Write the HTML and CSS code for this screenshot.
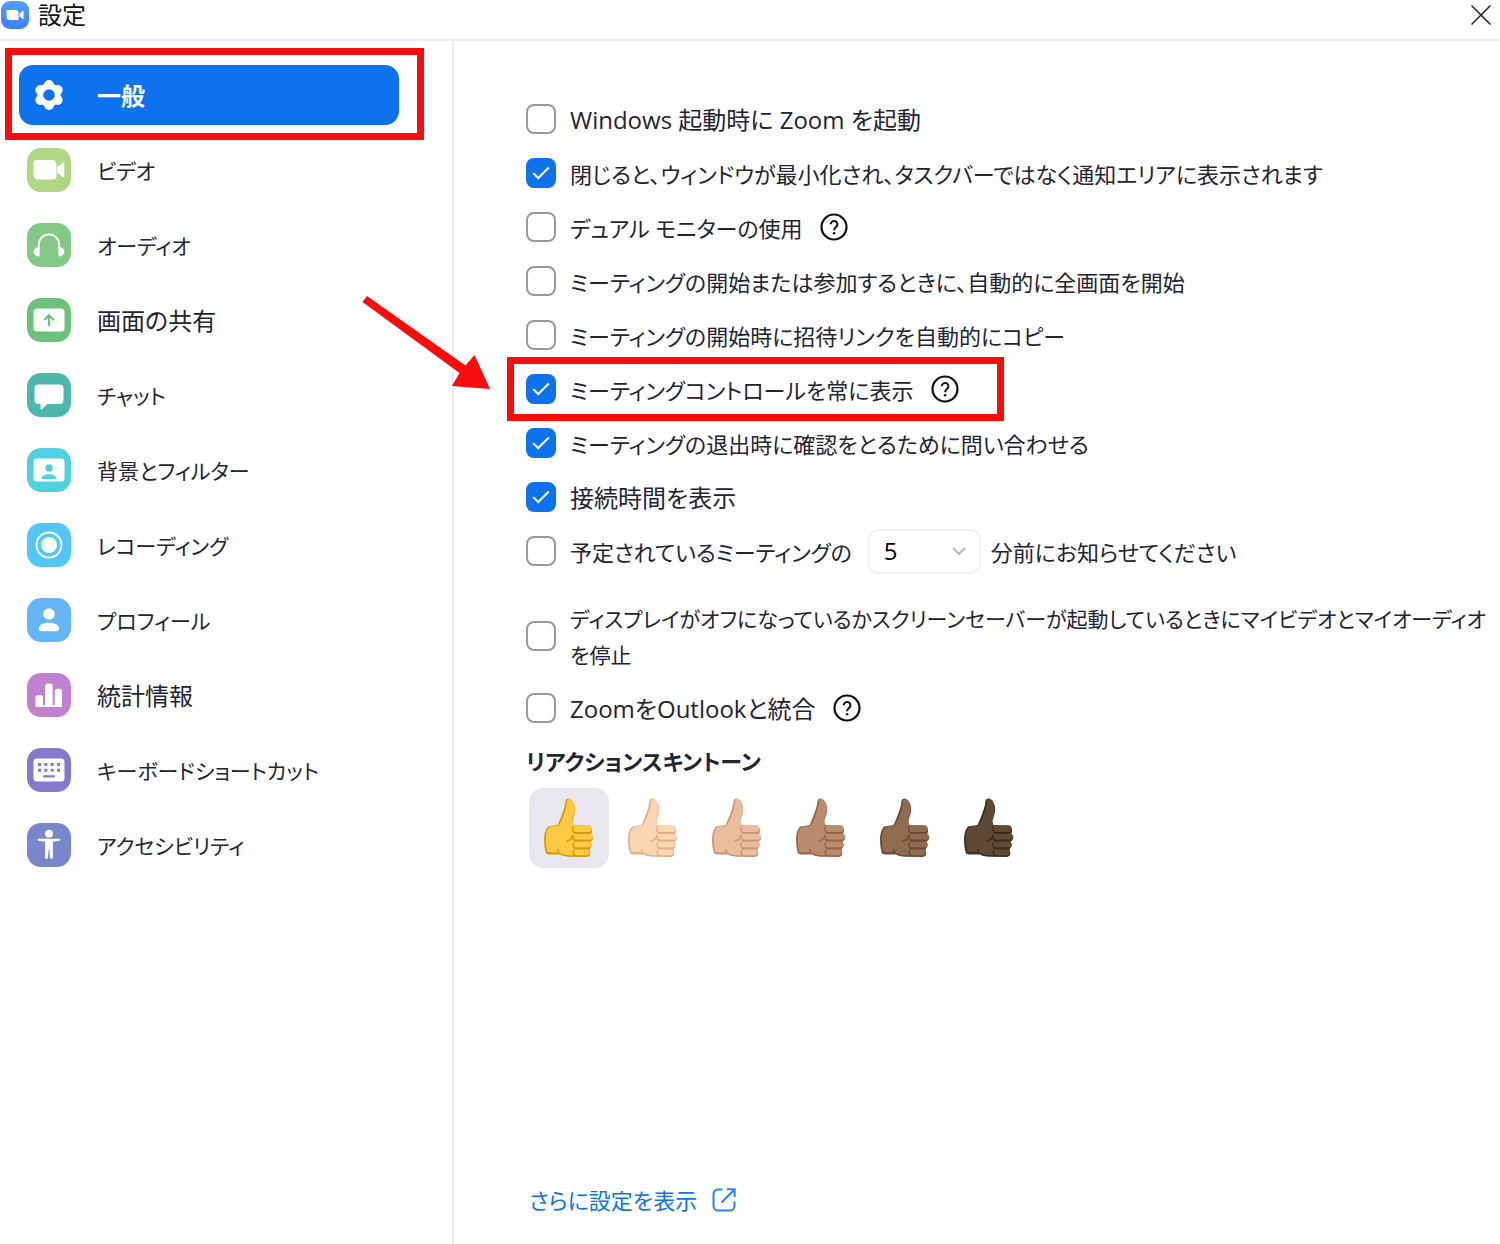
FILE: index.html
```html
<!DOCTYPE html>
<html lang="ja">
<head>
    <meta charset="UTF-8">
    <meta name="viewport" content="width=device-width, initial-scale=1">
    <title>設定</title>
    <link rel="stylesheet" href="styles.css">
</head>
<body>
    <!-- 共通アイコン -->
    <svg class="sprite" aria-hidden="true">
        <symbol id="help" viewBox="0 0 28 28">
            <circle cx="14" cy="14" r="12.5" fill="none" stroke="#111" stroke-width="2.2"/>
            <path d="M10.8 11.2a3.3 3.3 0 1 1 5.6 2.4c-1.2 1.1-2.3 1.7-2.3 3.6" fill="none" stroke="#111" stroke-width="2"/>
            <circle cx="14.1" cy="20.3" r="1.3" fill="#111"/>
        </symbol>
        <symbol id="thumb" viewBox="0 0 50 60">
            <path class="shade" d="M24.5.5C22.500.5 21.600 1.500 21.400 3.500C21 8 19.500 12.500 17.500 17.500C16 21.500 14.800 24.500 13.500 27L4 28.500C1 32 0 36 0 41C0 46 .6 51 2 55.500C4 57 12 56.500 16 56.500C19 58.500 23 58.700 28 58.700L42 59C45 59 46.500 57.500 46.300 55L45.500 51C48 49 48.400 46.500 46.500 43.500C50 42 50.500 38.500 47 36.200C48.800 33.500 48.500 29 45 27.800L29.500 27C28 25 28.300 22 29.400 19.500C31 15.500 31.500 11.500 31 8.500C30 4.500 27.500.5 24.500.5Z"/>
            <path d="M25 .8C23.600 1 23.300 2.500 23 4C22.500 9 21.200 13.500 19.200 18.500C17.800 22 16.500 25 14.500 27.600L5.500 29C2.500 32 1.700 36 1.700 41C1.700 46 2.200 50 3.500 54C6 54.700 12 54.200 16 54.700C19 56.800 23 57.200 30 57.200L31 28C27.500 26 27.500 22 29 18.500C30.500 15 31.300 11.500 30.600 8.500C29.800 5 27.700 1 25 .8Z"/>
            <rect x="29.500" y="27.200" width="18" height="6.800" rx="3"/>
            <rect x="29.500" y="35.800" width="19.500" height="6" rx="3"/>
            <rect x="29.500" y="43.500" width="18" height="6" rx="3"/>
            <rect x="29.500" y="51.300" width="16" height="6" rx="3"/>
            <path class="crease" d="M29.200 28.500C28.300 31 28.700 34 31 35L46.500 35M29.500 37C28.500 40.500 29.500 42.500 32 42.600L47 42.600M29.500 44.500C28.500 48 29.500 50.400 32 50.500L46 50.500M29.500 52C28.500 55.500 30 58 33 58M29 37C28 40.500 25 42.500 22.500 43.500M15 55C14 54 13.700 52.500 13.800 51"/>
        </symbol>
    </svg>

    <header class="titlebar">
        <svg class="logo" viewBox="0 0 28 28" aria-hidden="true">
            <defs>
                <linearGradient id="logo-bg" x1="0" y1="0" x2="0" y2="1">
                    <stop offset="0" stop-color="#559eff"/>
                    <stop offset="1" stop-color="#3b80fb"/>
                </linearGradient>
            </defs>
            <rect width="28" height="28" rx="9" fill="url(#logo-bg)"/>
            <path d="M5.500 9h9a3 3 0 0 1 3 3v7h-9a3 3 0 0 1-3-3zM18.500 12.500l4-3v9l-4-3z" fill="#fff"/>
        </svg>
        <h1>設定</h1>
        <button type="button" class="close" aria-label="閉じる">
            <svg viewBox="0 0 20 20"><path d="M.5.5l19 19M19.500.5l-19 19" stroke="#222" stroke-width="1.5"/></svg>
        </button>
    </header>

    <div class="layout">
        <nav class="sidebar">
            <a href="#general" class="nav-item active marked kanji" aria-current="page">
                <svg viewBox="0 0 44 44" aria-hidden="true">
                    <g fill="#fff">
                        <circle cx="22" cy="22" r="11.700"/>
                        <circle cx="22" cy="12" r="4.900"/>
                        <circle cx="30.700" cy="17" r="4.900"/>
                        <circle cx="30.700" cy="27" r="4.900"/>
                        <circle cx="22" cy="32" r="4.900"/>
                        <circle cx="13.300" cy="27" r="4.900"/>
                        <circle cx="13.300" cy="17" r="4.900"/>
                    </g>
                    <circle cx="22" cy="22" r="5.800" fill="#0e72ed"/>
                </svg>
                <span>一般</span>
            </a>
            <a href="#video" class="nav-item">
                <svg viewBox="0 0 44 44" aria-hidden="true">
                    <rect width="44" height="44" rx="14" fill="#afd884"/>
                    <path d="M9.500 12H25a4.500 4.500 0 0 1 4.500 4.500V28.500a3 3 0 0 1-3 3H11a4.500 4.500 0 0 1-4.500-4.500V15a3 3 0 0 1 3-3zM30.300 19l5.500-4.300q1.500-.8 1.500.8v12.500q0 1.600-1.500.8l-5.500-4.300z" fill="#fff"/>
                </svg>
                <span>ビデオ</span>
            </a>
            <a href="#audio" class="nav-item">
                <svg viewBox="0 0 44 44" aria-hidden="true">
                    <rect width="44" height="44" rx="14" fill="#84c887"/>
                    <path d="M11.800 26v-4.500a10.200 10.200 0 0 1 20.400 0V26" fill="none" stroke="#fff" stroke-width="1.700"/>
                    <path d="M12.600 24v9.500c-3.400 0-6-2-6-4.800s2.600-4.700 6-4.700zM31.400 24v9.500c3.400 0 6-2 6-4.800s-2.600-4.700-6-4.700z" fill="#fff"/>
                </svg>
                <span>オーディオ</span>
            </a>
            <a href="#share" class="nav-item kanji">
                <svg viewBox="0 0 44 44" aria-hidden="true">
                    <rect width="44" height="44" rx="14" fill="#6cc17b"/>
                    <rect x="6.500" y="10.500" width="31" height="23" rx="3.500" fill="#fff"/>
                    <path d="M22 28V17.500M17.300 22L22 17.300l4.700 4.700" fill="none" stroke="#6cc17b" stroke-width="2.300"/>
                </svg>
                <span>画面の共有</span>
            </a>
            <a href="#chat" class="nav-item">
                <svg viewBox="0 0 44 44" aria-hidden="true">
                    <rect width="44" height="44" rx="14" fill="#4eb6ac"/>
                    <path d="M11.500 11.500h21a4 4 0 0 1 4 4V27a4 4 0 0 1-4 4H20.300l-5.300 5.200q-1.400 1-1.400-.8V31h-2.100a4 4 0 0 1-4-4V15.500a4 4 0 0 1 4-4z" fill="#fff"/>
                </svg>
                <span>チャット</span>
            </a>
            <a href="#background" class="nav-item">
                <svg viewBox="0 0 44 44" aria-hidden="true">
                    <rect width="44" height="44" rx="14" fill="#50d0e1"/>
                    <rect x="6.500" y="10.500" width="31" height="23" rx="3.500" fill="#fff"/>
                    <circle cx="22" cy="20" r="3.700" fill="#50d0e1"/>
                    <path d="M14.300 31c.4-3 3.300-4.800 7.700-4.800s7.300 1.800 7.700 4.800z" fill="#50d0e1"/>
                </svg>
                <span>背景とフィルター</span>
            </a>
            <a href="#recording" class="nav-item">
                <svg viewBox="0 0 44 44" aria-hidden="true">
                    <rect width="44" height="44" rx="14" fill="#52c5f9"/>
                    <circle cx="22" cy="22" r="12.500" fill="none" stroke="#fff" stroke-width="1.900"/>
                    <circle cx="22" cy="22" r="8" fill="#fff"/>
                </svg>
                <span>レコーディング</span>
            </a>
            <a href="#profile" class="nav-item">
                <svg viewBox="0 0 44 44" aria-hidden="true">
                    <rect width="44" height="44" rx="14" fill="#66b6f7"/>
                    <circle cx="22" cy="16" r="5.800" fill="#fff"/>
                    <path d="M22 24.700c6 0 10 2.300 10 5.800q0 2.800-2.800 2.800H14.800Q12 33.300 12 30.500c0-3.500 4-5.800 10-5.800z" fill="#fff"/>
                </svg>
                <span>プロフィール</span>
            </a>
            <a href="#stats" class="nav-item kanji">
                <svg viewBox="0 0 44 44" aria-hidden="true">
                    <rect width="44" height="44" rx="14" fill="#c181d1"/>
                    <path d="M8.500 34V24.500a2.500 2.500 0 0 1 2.500-2.500h2.500a2.500 2.500 0 0 1 2.500 2.500V32h2.200V13a2.500 2.500 0 0 1 2.500-2.500h2.500a2.500 2.500 0 0 1 2.500 2.500V32h2V18.300a2.500 2.500 0 0 1 2.500-2.500h2.300a2.500 2.500 0 0 1 2.500 2.500V34z" fill="#fff"/>
                </svg>
                <span>統計情報</span>
            </a>
            <a href="#keyboard" class="nav-item">
                <svg viewBox="0 0 44 44" aria-hidden="true">
                    <rect width="44" height="44" rx="14" fill="#8679cb"/>
                    <rect x="6.500" y="10.500" width="31" height="23" rx="3.500" fill="#fff"/>
                    <path d="M11 16.400h22M11 22.300h22" stroke="#8679cb" stroke-width="3" stroke-dasharray="3 3.330"/>
                    <path d="M17 28.300h10" stroke="#8679cb" stroke-width="2.200" stroke-linecap="round"/>
                </svg>
                <span>キーボードショートカット</span>
            </a>
            <a href="#accessibility" class="nav-item">
                <svg viewBox="0 0 44 44" aria-hidden="true">
                    <rect width="44" height="44" rx="14" fill="#7986cb"/>
                    <circle cx="22" cy="10.700" r="3.900" fill="#fff"/>
                    <path d="M11.500 15.800h21q.8 0 .8.900t-.8 1l-6.600 1V34.500q0 1.200-1.400 1.200t-1.500-1.200L22.300 26h-.6l-.7 8.500q-.1 1.200-1.500 1.200t-1.400-1.200V18.700l-6.600-1q-.8-.1-.8-1t.8-.9z" fill="#fff"/>
                </svg>
                <span>アクセシビリティ</span>
            </a>
        </nav>

        <main class="content">
            <div class="option kanji">
                <input type="checkbox" id="startup">
                <label for="startup">Windows 起動時に Zoom を起動</label>
            </div>
            <div class="option">
                <input type="checkbox" id="minimize" checked>
                <label for="minimize">閉じると、ウィンドウが最小化され、タスクバーではなく通知エリアに表示されます</label>
            </div>
            <div class="option">
                <input type="checkbox" id="dual">
                <label for="dual">デュアル モニターの使用</label>
                <button type="button" class="help" aria-label="ヘルプ"><svg><use href="#help"/></svg></button>
            </div>
            <div class="option">
                <input type="checkbox" id="fullscreen">
                <label for="fullscreen">ミーティングの開始または参加するときに、自動的に全画面を開始</label>
            </div>
            <div class="option">
                <input type="checkbox" id="copylink">
                <label for="copylink">ミーティングの開始時に招待リンクを自動的にコピー</label>
            </div>
            <div class="option marked">
                <input type="checkbox" id="controls" checked>
                <label for="controls">ミーティングコントロールを常に表示</label>
                <button type="button" class="help" aria-label="ヘルプ"><svg><use href="#help"/></svg></button>
                <svg class="arrow" viewBox="0 0 130 96" aria-hidden="true">
                    <path d="M7 1L105.500 70.500L114.500 60L130 94L92 91L99.500 78L2.500 7z" fill="#fc0d0d"/>
                </svg>
            </div>
            <div class="option">
                <input type="checkbox" id="confirm" checked>
                <label for="confirm">ミーティングの退出時に確認をとるために問い合わせる</label>
            </div>
            <div class="option kanji">
                <input type="checkbox" id="duration" checked>
                <label for="duration">接続時間を表示</label>
            </div>
            <div class="option">
                <input type="checkbox" id="remind">
                <label for="remind">予定されているミーティングの</label>
                <span class="select">
                    <select id="minutes">
                        <option selected>5</option>
                        <option>10</option>
                        <option>15</option>
                    </select>
                    <svg viewBox="0 0 14 8" aria-hidden="true"><path d="M1 1l6 6 6-6" fill="none" stroke="#b5b5c3" stroke-width="2"/></svg>
                </span>
                <label for="minutes">分前にお知らせてください</label>
            </div>
            <div class="option long">
                <input type="checkbox" id="screensaver">
                <label for="screensaver">ディスプレイがオフになっているかスクリーンセーバーが起動しているときにマイビデオとマイオーディオを停止</label>
            </div>
            <div class="option kanji">
                <input type="checkbox" id="outlook">
                <label for="outlook">ZoomをOutlookと統合</label>
                <button type="button" class="help" aria-label="ヘルプ"><svg><use href="#help"/></svg></button>
            </div>

            <h2>リアクションスキントーン</h2>
            <div class="tones">
                <button type="button" class="tone tone-default selected" aria-label="デフォルト"><svg><use href="#thumb"/></svg></button>
                <button type="button" class="tone tone-light" aria-label="明るい"><svg><use href="#thumb"/></svg></button>
                <button type="button" class="tone tone-medium-light" aria-label="やや明るい"><svg><use href="#thumb"/></svg></button>
                <button type="button" class="tone tone-medium" aria-label="中間"><svg><use href="#thumb"/></svg></button>
                <button type="button" class="tone tone-medium-dark" aria-label="やや濃い"><svg><use href="#thumb"/></svg></button>
                <button type="button" class="tone tone-dark" aria-label="濃い"><svg><use href="#thumb"/></svg></button>
            </div>

            <a href="#more" class="more">
                さらに設定を表示
                <svg viewBox="0 0 24 24" aria-hidden="true">
                    <path d="M10.500 1.500H6A4.500 4.500 0 0 0 1.500 6v12A4.500 4.500 0 0 0 6 22.500h12a4.500 4.500 0 0 0 4.500-4.500v-4.500M9.500 14.500l13-13M15 1.300h7.700V9" fill="none" stroke="#2d83ee" stroke-width="2"/>
                </svg>
            </a>
        </main>
    </div>
</body>
</html>
```

FILE: styles.css
```css
*,
*::before,
*::after {
    box-sizing: border-box;
}
body {
    margin: 0;
    min-height: 100vh;
    display: flex;
    flex-direction: column;
    background: #fff;
    color: #232333;
    font-family: "Open Sans", "Noto Sans CJK JP", sans-serif;
    font-size: 22px;
    line-height: 36px;
    font-feature-settings: "palt";
}
button {
    padding: 0;
    border: none;
    background: none;
    cursor: pointer;
}
svg {
    display: block;
    flex-shrink: 0;
}
.sprite {
    position: absolute;
    width: 0;
    height: 0;
}

/* タイトルバー */
.titlebar {
    display: flex;
    align-items: center;
    height: 41px;
    padding: 0 9px 9px 1px;
    border-bottom: 2px solid #ebebf5;
}
.titlebar h1 {
    margin: 0;
    font-size: 24px;
    line-height: 30px;
    font-weight: 400;
    color: #111;
}
.logo {
    width: 28px;
    height: 28px;
    margin-right: 9px;
}
.close {
    margin-left: auto;
}
.close svg {
    width: 20px;
    height: 20px;
}

.layout {
    flex: 1;
    display: flex;
}

/* サイドメニュー */
.sidebar {
    flex: 0 0 454px;
    display: flex;
    flex-direction: column;
    gap: 15px;
    padding: 24px 53px 24px 19px;
    border-right: 2px solid #ebebf5;
}
.nav-item {
    display: flex;
    align-items: center;
    gap: 26px;
    height: 60px;
    padding: 0 8px;
    border-radius: 14px;
    color: #232333;
    font-size: 21px;
    text-decoration: none;
}
.nav-item svg {
    width: 44px;
    height: 44px;
}
.nav-item span {
    padding-top: 2px;
}
.nav-item.active {
    background: #0e72ed;
    color: #fff;
    font-weight: 700;
}

/* 赤枠 */
.marked {
    position: relative;
}
.marked::after {
    content: "";
    position: absolute;
    border: 7px solid #fc0d0d;
    pointer-events: none;
}
.nav-item.marked::after {
    inset: -17px -25px -15px -14px;
}
.option.marked::after {
    top: -5px;
    bottom: -5px;
    left: -19px;
    width: 497px;
}
.arrow {
    position: absolute;
    top: -67px;
    left: -166px;
    width: 130px;
    height: 96px;
}

/* 設定項目 */
.content {
    flex: 1;
    min-width: 0;
    display: flex;
    flex-direction: column;
    padding: 51px 0 26px 72px;
}
.option {
    display: flex;
    align-items: center;
    min-height: 54px;
}
.option label {
    padding-top: 2px;
}
.option input {
    appearance: none;
    flex-shrink: 0;
    display: flex;
    justify-content: center;
    width: 30px;
    height: 30px;
    margin: 0 14px 0 0;
    border: 2px solid #98989f;
    border-radius: 8px;
    background: #fff;
}
.option input:checked {
    border-color: #0e72ed;
    background: #0e72ed;
}
.option input:checked::before {
    content: "";
    width: 8px;
    height: 16px;
    margin-top: 3px;
    border: solid #fff;
    border-width: 0 2px 2px 0;
    transform: rotate(45deg);
}
.option.long {
    margin: 21px 0 8px;
    font-size: 21px;
}
.kanji {
    font-size: 24px;
}
.help {
    margin-left: 17px;
}
.help svg {
    width: 28px;
    height: 28px;
}
.select {
    position: relative;
    margin: 0 10px 0 16px;
}
.select select {
    appearance: none;
    display: block;
    width: 113px;
    height: 45px;
    padding: 0 14px;
    border: 2px solid #f0f0f8;
    border-radius: 10px;
    background: #fff;
    color: #000;
    font: inherit;
    font-size: 24px;
}
.select svg {
    position: absolute;
    top: 18px;
    right: 15px;
    width: 14px;
    height: 8px;
    pointer-events: none;
}

/* スキントーン */
h2 {
    margin: 8px 0 9px;
    font-size: 22px;
    line-height: 36px;
    font-weight: 700;
}
.tones {
    display: flex;
    gap: 4px;
    padding-left: 3px;
}
.tone {
    display: flex;
    align-items: center;
    justify-content: center;
    width: 80px;
    height: 80px;
    border-radius: 14px;
}
.tone.selected {
    background: #e8e7ee;
}
.tone svg {
    width: 50px;
    height: 60px;
    fill: var(--skin);
}
.shade {
    fill: var(--line);
}
.crease {
    fill: none;
    stroke: var(--line);
    stroke-width: 1.5px;
}
.tone-default {
    --skin: #fbc943;
    --line: #d39c0c;
}
.tone-light {
    --skin: #fcd5b3;
    --line: #dfaf86;
}
.tone-medium-light {
    --skin: #eabd9f;
    --line: #cb9676;
}
.tone-medium {
    --skin: #b98b6f;
    --line: #96664a;
}
.tone-medium-dark {
    --skin: #8f6b50;
    --line: #6d4a31;
}
.tone-dark {
    --skin: #5f4935;
    --line: #3d2b1b;
}

.more {
    display: flex;
    align-items: center;
    gap: 15px;
    margin-top: auto;
    padding-left: 3px;
    color: #0e72ed;
    text-decoration: none;
}
.more svg {
    width: 24px;
    height: 24px;
}
```
